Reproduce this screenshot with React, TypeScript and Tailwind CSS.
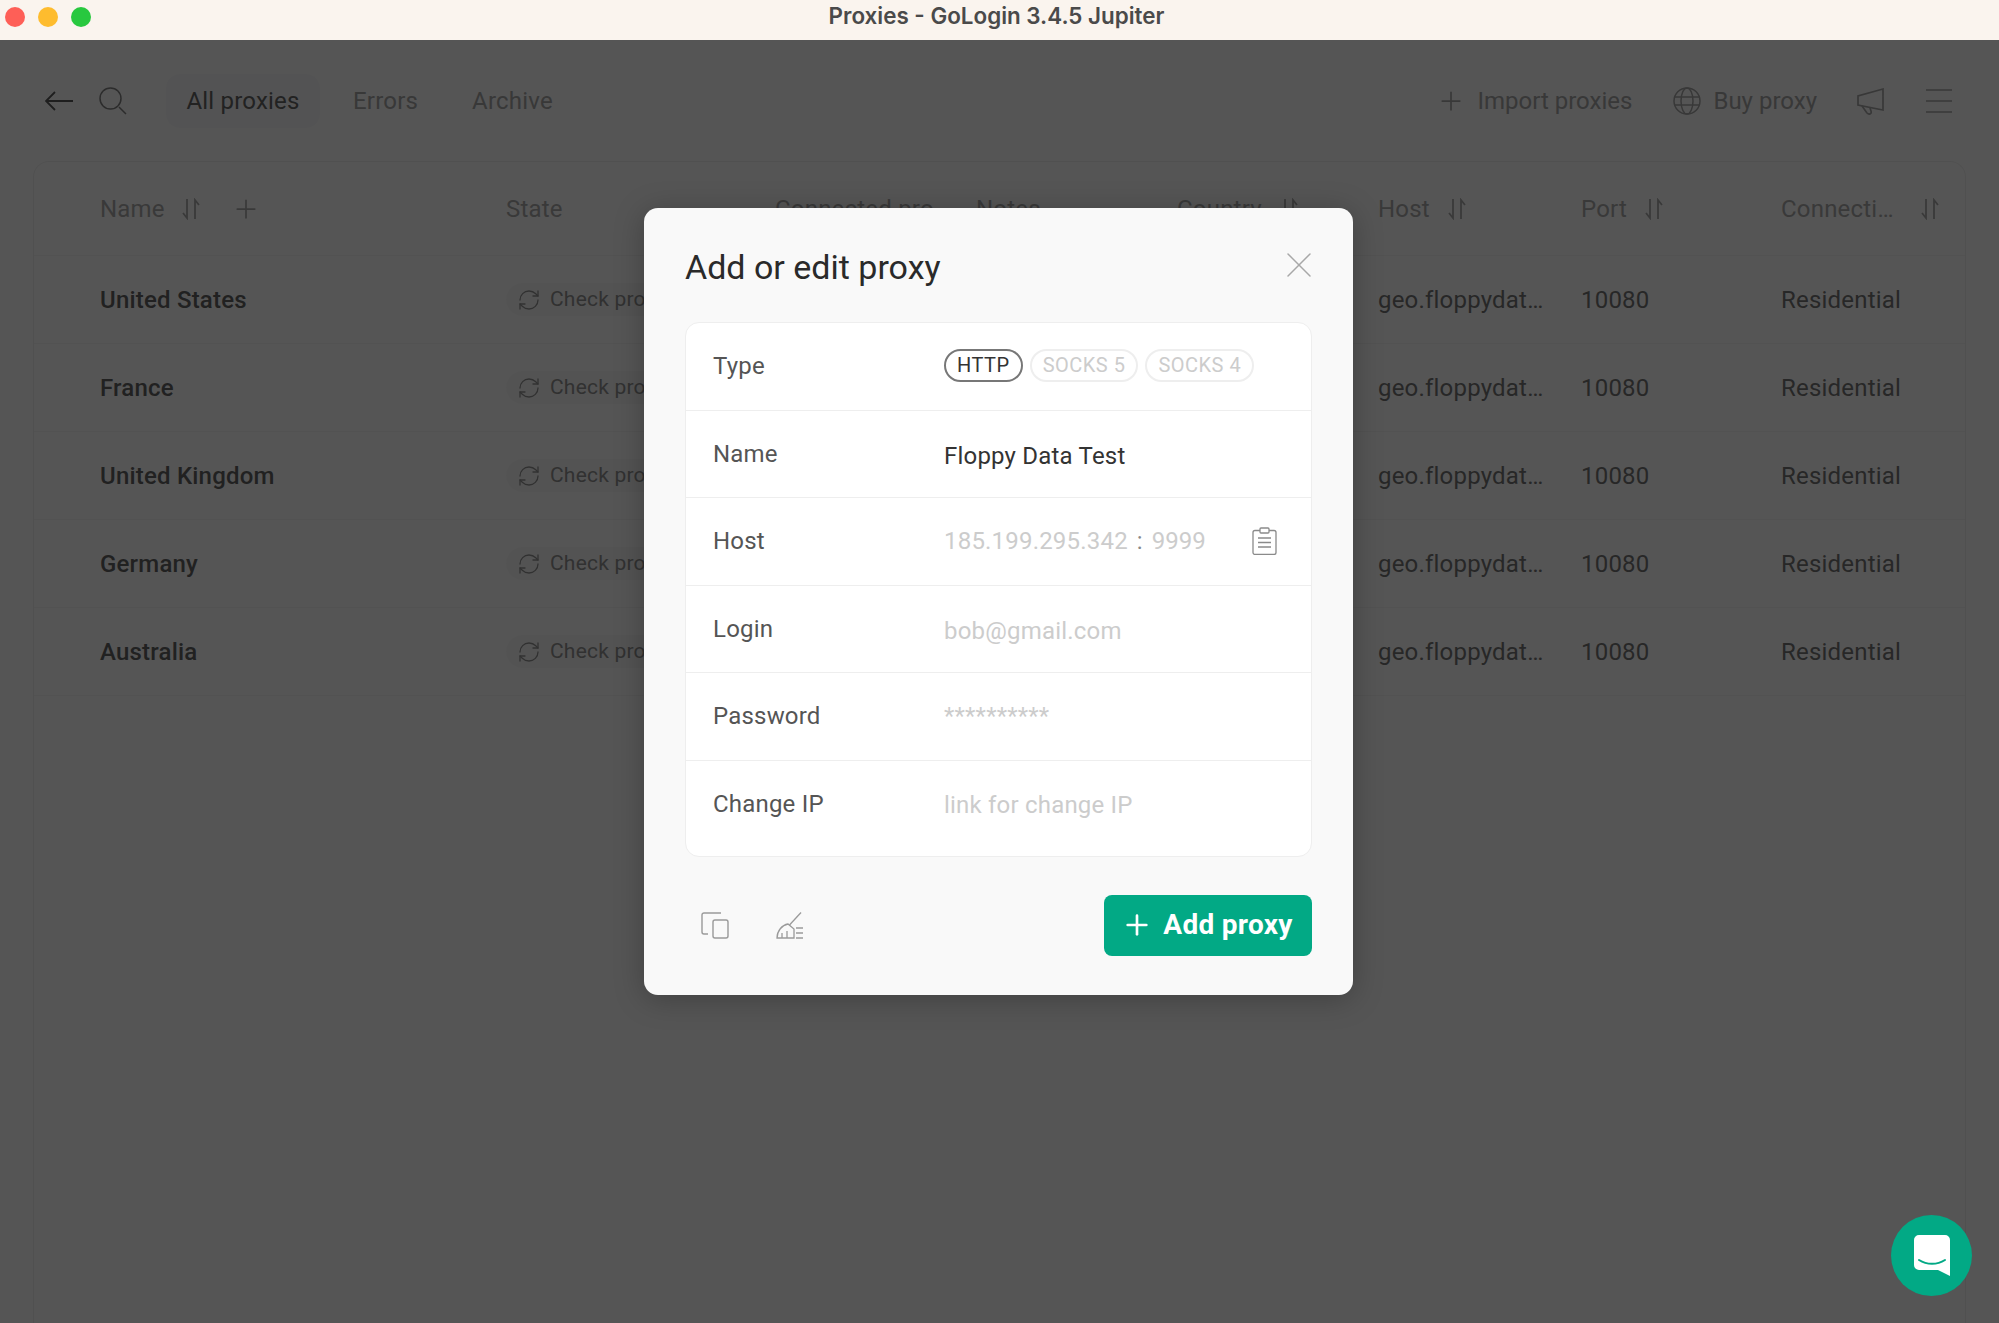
import { Plus, RefreshCw, X } from "lucide-react";

const COLS = "grid grid-cols-[406px_269px_201px_201px_201px_203px_200px_1fr] items-center pl-[66px]";

const ROWS = ["United States", "France", "United Kingdom", "Germany", "Australia"];

function SortIcon({ className = "" }: { className?: string }) {
  return (
    <svg viewBox="0 0 18 22" fill="none" stroke="currentColor" strokeWidth="1.8" className={`h-[22px] w-[18px] ${className}`}>
      <path d="M5 1v19l-4-5" />
      <path d="M13 21V2l4 5" />
    </svg>
  );
}

function HeadCell({ label, sort = true, gap = "gap-[18px]" }: { label: string; sort?: boolean; gap?: string }) {
  return (
    <div className={`flex items-center ${gap}`}>
      <span>{label}</span>
      {sort && <SortIcon />}
    </div>
  );
}

function TopBar() {
  return (
    <div className="flex h-[122px] items-center pl-[45px] pr-[47px] text-[24px] text-[#a4a4a4]">
      <svg viewBox="0 0 28 22" fill="none" stroke="currentColor" strokeWidth="1.8" className="h-[22px] w-[28px] text-[#5a5a5a]">
        <path d="M28 11H1M10 2l-9 9 9 9" />
      </svg>
      <svg viewBox="0 0 28 28" fill="none" stroke="currentColor" strokeWidth="1.5" className="ml-[26px] h-[28px] w-[28px] text-[#808080]">
        <circle cx="11.5" cy="11.5" r="10.5" />
        <path d="M20 20l7 7" />
      </svg>
      <div className="ml-[39px] flex h-[54px] w-[154px] items-center justify-center rounded-[14px] bg-[#f4f4f6] tracking-[0.2px] text-[#646464]">All proxies</div>
      <span className="ml-[33px] tracking-[0.2px]">Errors</span>
      <span className="ml-[54px] tracking-[0.2px]">Archive</span>
      <div className="ml-auto flex items-center">
        <Plus size={30} strokeWidth={1.4} className="mr-[11px]" />
        <span>Import proxies</span>
        <svg viewBox="0 0 28 28" fill="none" stroke="currentColor" strokeWidth="1.5" className="ml-[41px] h-[28px] w-[28px]">
          <circle cx="14" cy="14" r="13" />
          <ellipse cx="14" cy="14" rx="6" ry="13" />
          <path d="M1.5 10h25M1.5 18h25" />
        </svg>
        <span className="ml-[12px]">Buy proxy</span>
        <svg viewBox="0 0 27 27" fill="none" stroke="currentColor" strokeWidth="1.7" className="ml-[40px] h-[27px] w-[27px]">
          <path d="M26 1L1 8v9l25 5z" />
          <path d="M5 18l5 7c2 2 5 1 4-2l-1-3" />
        </svg>
        <svg viewBox="0 0 26 26" fill="none" stroke="currentColor" strokeWidth="1.6" className="ml-[42px] h-[26px] w-[26px]">
          <path d="M0 2h26M0 13h26M0 24h26" />
        </svg>
      </div>
    </div>
  );
}

function ProxyTable() {
  return (
    <div className="mx-[33px] -mt-px flex-1 rounded-t-[16px] border border-b-0 border-[#ebebeb] text-[24px] tracking-[0.2px]">
      <div className={`${COLS} h-[94px] border-b border-[#efefef] text-[#a8a8a8]`}>
        <div className="flex items-center">
          <span>Name</span>
          <SortIcon className="ml-[17px]" />
          <Plus size={30} strokeWidth={1.4} className="ml-[31px]" />
        </div>
        <span>State</span>
        <span>Connected pro</span>
        <span>Notes</span>
        <HeadCell label="Country" />
        <HeadCell label="Host" />
        <HeadCell label="Port" />
        <HeadCell label="Connecti…" gap="gap-[27px]" />
      </div>
      {ROWS.map((name) => (
        <div key={name} className={`${COLS} h-[88px] border-b border-[#efefef] text-[#747474]`}>
          <span className="font-medium text-[#626262]">{name}</span>
          <div className="flex h-[33px] w-[190px] items-center gap-[9px] rounded-full bg-[#f4f4f4] pl-[11px] text-[21px] text-[#909090]">
            <RefreshCw size={24} strokeWidth={1.3} />
            <span>Check proxy</span>
          </div>
          <span />
          <span />
          <span />
          <span>geo.floppydat…</span>
          <span>10080</span>
          <span>Residential</span>
        </div>
      ))}
    </div>
  );
}

function FieldRow({ label, last = false, children }: { label: string; last?: boolean; children: React.ReactNode }) {
  return (
    <div className={`flex items-center pl-[27px] pr-[34px] ${last ? "h-[95px] pb-[9px]" : "h-[87.5px] border-b border-[#eeeeee]"}`}>
      <span className="w-[231px] shrink-0 text-[#555555]">{label}</span>
      {children}
    </div>
  );
}

function Chip({ label, active = false }: { label: string; active?: boolean }) {
  return (
    <span className={`flex h-[33px] items-center rounded-full border-2 px-[11px] text-[20px] tracking-[0.5px] ${active ? "border-[#777777] text-[#333333]" : "border-[#eeeeee] text-[#cccccc]"}`}>
      {label}
    </span>
  );
}

function ProxyModal() {
  return (
    <div className="h-[787px] w-[709px] rounded-[14px] bg-[#f9f9f9] px-[41px] shadow-[0_4px_30px_rgba(0,0,0,0.25)]">
      <div className="flex h-[114px] items-center justify-between pt-[4px]">
        <h2 className="text-[34px] font-normal text-[#2a2a2a]">Add or edit proxy</h2>
        <X size={44} strokeWidth={0.8} className="-mt-[5px] mr-[-9px] text-[#a8a8a8]" />
      </div>
      <div className="rounded-[14px] border border-[#eeeeee] bg-white text-[24px] tracking-[0.2px]">
        <FieldRow label="Type">
          <div className="-mt-[2px] flex gap-[7px]">
            <Chip label="HTTP" active />
            <Chip label="SOCKS 5" />
            <Chip label="SOCKS 4" />
          </div>
        </FieldRow>
        <FieldRow label="Name">
          <span className="mt-[4px] text-[#333333]">Floppy Data Test</span>
        </FieldRow>
        <FieldRow label="Host">
          <span className="text-[#cccccc]">185.199.295.342</span>
          <span className="mx-[9px] text-[#888888]">:</span>
          <span className="tracking-normal text-[#cccccc]">9999</span>
          <svg viewBox="0 0 25 28" fill="none" stroke="#8a8a8a" strokeWidth="1.3" className="ml-auto h-[28px] w-[25px]">
            <rect x="1" y="3.5" width="23" height="24" rx="2" />
            <rect x="8" y="1" width="9" height="5" rx="1" fill="#ffffff" />
            <path d="M6 11h13M6 15.5h13M6 20h13" />
          </svg>
        </FieldRow>
        <FieldRow label="Login">
          <span className="mt-[4px] text-[#cccccc]">bob@gmail.com</span>
        </FieldRow>
        <FieldRow label="Password">
          <span className="text-[#cccccc]">**********</span>
        </FieldRow>
        <FieldRow label="Change IP" last>
          <span className="mt-[2px] text-[#cccccc]">link for change IP</span>
        </FieldRow>
      </div>
      <div className="mt-[38px] flex items-center">
        <svg viewBox="0 0 28 27" fill="none" stroke="#9a9a9a" strokeWidth="1.4" className="ml-[16px] h-[27px] w-[28px]">
          <rect x="12" y="8" width="15" height="18" rx="2" />
          <path d="M20 1H3a2 2 0 0 0-2 2v17a2 2 0 0 0 2 2h4" />
        </svg>
        <svg viewBox="0 0 28 27" fill="none" stroke="#9a9a9a" strokeWidth="1.3" className="ml-[47px] h-[27px] w-[28px]">
          <path d="M25 0.5L13.5 13" />
          <path d="M1 26c0-7 5-13 11-14l6 5v9z" />
          <path d="M6 26v-5M11 26v-7M20 16h7M20 21h7M20 26h7" />
        </svg>
        <button className="ml-auto flex h-[61px] w-[208px] items-center justify-center gap-[10px] rounded-[8px] bg-[#02a985] pr-[2px] text-[28px] font-bold tracking-[0.3px] text-white">
          <Plus size={32} strokeWidth={2} />
          Add proxy
        </button>
      </div>
    </div>
  );
}

export default function App() {
  return (
    <div className="relative flex h-screen flex-col overflow-hidden bg-[#fafafa] font-['Roboto',sans-serif]">
      <div className="relative z-20 flex h-10 shrink-0 items-center justify-center bg-[#faf4ee] pb-[8px] pr-[6px] font-['Inter',sans-serif] text-[22.4px] font-semibold text-[#4a4a4a]">
        <div className="absolute left-[5px] top-[7px] flex gap-[13px]">
          <span className="h-5 w-5 rounded-full bg-[#fe5f57]" />
          <span className="h-5 w-5 rounded-full bg-[#febc2e]" />
          <span className="h-5 w-5 rounded-full bg-[#28c83f]" />
        </div>
        Proxies - GoLogin 3.4.5 Jupiter
      </div>
      <TopBar />
      <ProxyTable />

      {/* dimmed backdrop with the dialog on top */}
      <div className="absolute inset-x-0 bottom-0 top-10 flex justify-center bg-black/[0.66] pr-[2px] pt-[168px]">
        <ProxyModal />
      </div>

      <button className="absolute bottom-[27px] right-[27px] flex h-[81px] w-[81px] items-center justify-center rounded-full bg-[#02a985]">
        <svg viewBox="0 0 36 41" className="h-[41px] w-[36px]">
          <path d="M5 0h26a5 5 0 0 1 5 5v36l-12-6H5a5 5 0 0 1-5-5V5a5 5 0 0 1 5-5z" fill="#ffffff" />
          <path d="M5 25c8 5 18 5 26 0" fill="none" stroke="#02a985" strokeWidth="2" strokeLinecap="round" />
        </svg>
      </button>
    </div>
  );
}
